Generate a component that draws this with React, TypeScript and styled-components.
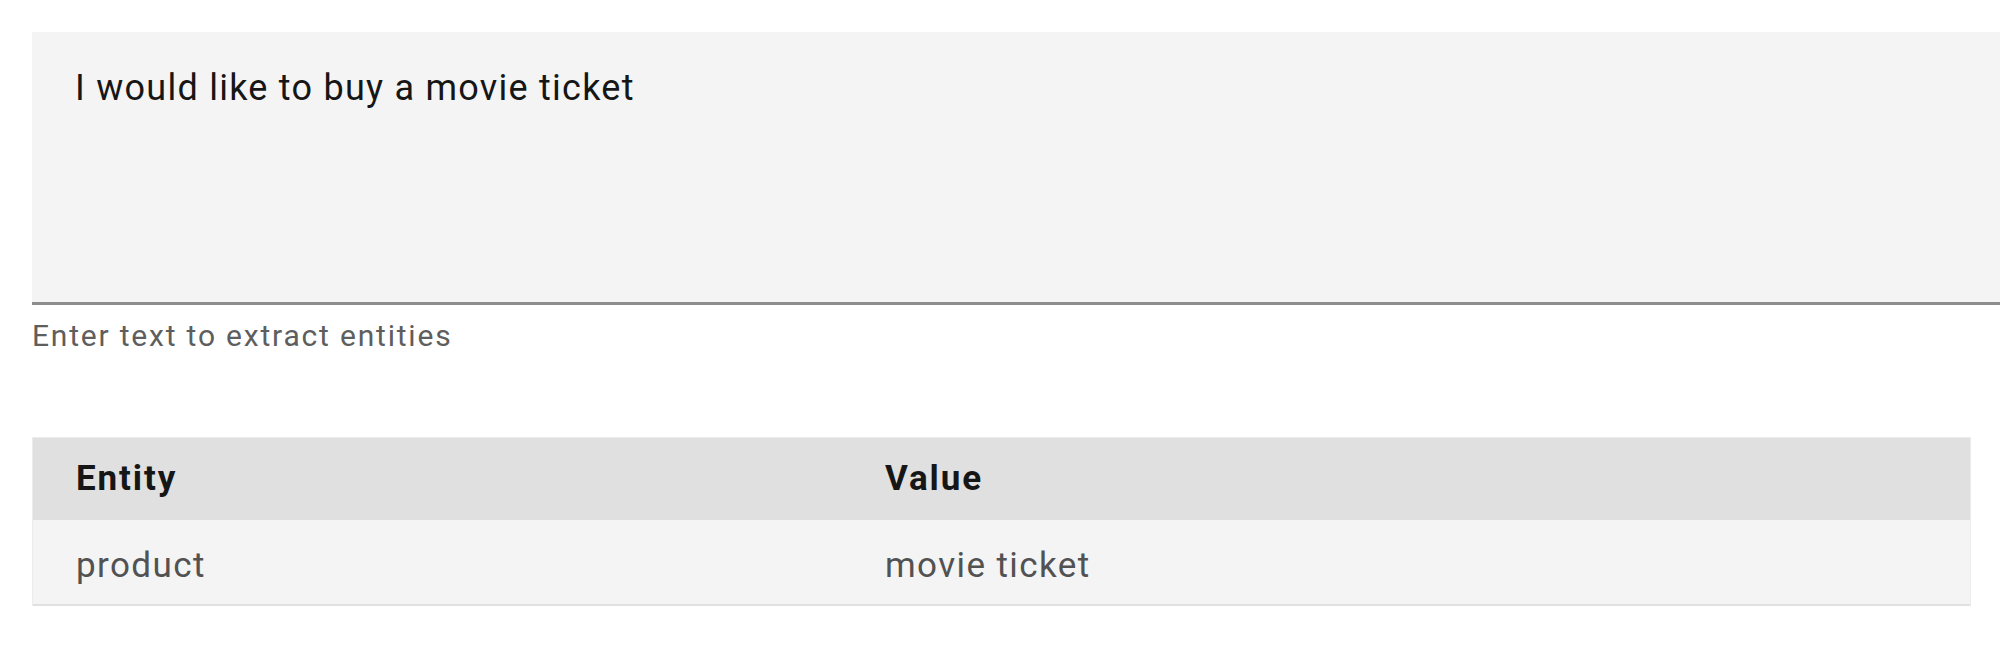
import React from "react";
import styled, { createGlobalStyle } from "styled-components";

const GlobalStyle = createGlobalStyle`
  html, body {
    margin: 0;
    padding: 0;
    background: #ffffff;
    overflow: hidden;
  }
  body {
    font-family: Roboto, "Noto Sans", sans-serif;
  }
`;

const Page = styled.div`
  display: flex;
  flex-direction: column;
  width: 2000px;
  box-sizing: border-box;
  padding: 32px 29px 0 32px;
`;

const Field = styled.div`
  display: flex;
  flex-direction: column;
`;

const TextArea = styled.textarea`
  display: block;
  box-sizing: border-box;
  width: calc(100% + 60px);
  height: 273px;
  margin: 0;
  padding: 31px 43px 0 43px;
  border: none;
  border-bottom: 3px solid #8d8d8d;
  border-radius: 0;
  background: #f4f4f4;
  color: #161616;
  font-family: Roboto, "Noto Sans", sans-serif;
  font-size: 36px;
  line-height: 1.4;
  letter-spacing: 1.25px;
  resize: none;
  outline: none;
`;

const Helper = styled.div`
  margin-top: 11px;
  padding-left: 0;
  color: #5e5e5e;
  font-size: 30px;
  line-height: 1.3;
  letter-spacing: 1.8px;
`;

const Table = styled.div`
  margin-top: 82px;
  display: flex;
  flex-direction: column;
  box-sizing: border-box;
  border: 1px solid #ececec;
  border-bottom: none;
`;

const Row = styled.div<{ $head?: boolean }>`
  display: grid;
  grid-template-columns: 809px 1fr;
  align-items: center;
  height: ${(p) => (p.$head ? "82px" : "84px")};
  background: ${(p) => (p.$head ? "#e0e0e0" : "#f4f4f4")};
  border-bottom: ${(p) => (p.$head ? "none" : "2px solid #e0e0e0")};
`;

const Cell = styled.div<{ $head?: boolean }>`
  padding-left: 43px;
  color: ${(p) => (p.$head ? "#161616" : "#525252")};
  font-size: 35px;
  font-weight: ${(p) => (p.$head ? 700 : 400)};
  letter-spacing: ${(p) => (p.$head ? "1.9px" : "1.4px")};
  line-height: 1;
  padding-bottom: ${(p) => (p.$head ? "2px" : "0")};
  padding-top: ${(p) => (p.$head ? "0" : "6px")};
`;

export default function App() {
  return (
    <>
      <GlobalStyle />
      <Page>
        <Field>
          <TextArea readOnly defaultValue="I would like to buy a movie ticket" />
          <Helper>Enter text to extract entities</Helper>
        </Field>
        <Table>
          <Row $head>
            <Cell $head>Entity</Cell>
            <Cell $head>Value</Cell>
          </Row>
          <Row>
            <Cell>product</Cell>
            <Cell>movie ticket</Cell>
          </Row>
        </Table>
      </Page>
    </>
  );
}
